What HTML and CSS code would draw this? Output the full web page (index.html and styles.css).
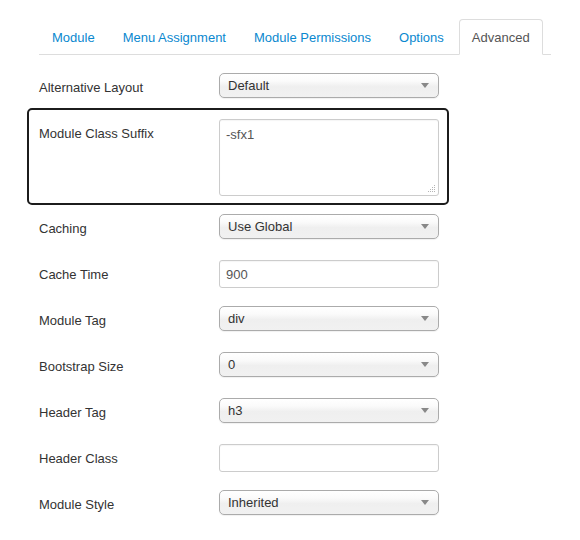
FILE: index.html
```html
<!DOCTYPE html>
<html>
<head>
<meta charset="utf-8">
<link rel="stylesheet" href="styles.css">
</head>
<body>
<div class="page">
  <ul class="tabs">
    <li><a>Module</a></li>
    <li><a>Menu Assignment</a></li>
    <li><a>Module Permissions</a></li>
    <li><a>Options</a></li>
    <li class="active"><a>Advanced</a></li>
  </ul>
  <div class="form">
    <div class="group">
      <div class="label">Alternative Layout</div>
      <div class="select"><span>Default</span><svg class="arrow" width="8" height="5" viewBox="0 0 8 5"><path d="M0 0H8L4 5Z" fill="#888"/></svg></div>
    </div>
    <div class="highlight">
      <div class="group">
        <div class="label">Module Class Suffix</div>
        <div class="textarea-wrap">
          <textarea class="textarea">-sfx1</textarea>
          <svg class="grip" width="8" height="8" viewBox="0 0 8 8">
            <g fill="#b5b5b5">
              <rect x="6" y="0" width="1" height="1"/>
              <rect x="4" y="2" width="1" height="1"/><rect x="6" y="2" width="1" height="1"/>
              <rect x="2" y="4" width="1" height="1"/><rect x="4" y="4" width="1" height="1"/><rect x="6" y="4" width="1" height="1"/>
              <rect x="0" y="6" width="1" height="1"/><rect x="2" y="6" width="1" height="1"/><rect x="4" y="6" width="1" height="1"/><rect x="6" y="6" width="1" height="1"/>
            </g>
          </svg>
        </div>
      </div>
    </div>
    <div class="group">
      <div class="label">Caching</div>
      <div class="select"><span>Use Global</span><svg class="arrow" width="8" height="5" viewBox="0 0 8 5"><path d="M0 0H8L4 5Z" fill="#888"/></svg></div>
    </div>
    <div class="group">
      <div class="label">Cache Time</div>
      <input class="input" type="text" value="900">
    </div>
    <div class="group">
      <div class="label">Module Tag</div>
      <div class="select"><span>div</span><svg class="arrow" width="8" height="5" viewBox="0 0 8 5"><path d="M0 0H8L4 5Z" fill="#888"/></svg></div>
    </div>
    <div class="group">
      <div class="label">Bootstrap Size</div>
      <div class="select"><span>0</span><svg class="arrow" width="8" height="5" viewBox="0 0 8 5"><path d="M0 0H8L4 5Z" fill="#888"/></svg></div>
    </div>
    <div class="group">
      <div class="label">Header Tag</div>
      <div class="select"><span>h3</span><svg class="arrow" width="8" height="5" viewBox="0 0 8 5"><path d="M0 0H8L4 5Z" fill="#888"/></svg></div>
    </div>
    <div class="group">
      <div class="label">Header Class</div>
      <input class="input" type="text" value="">
    </div>
    <div class="group">
      <div class="label">Module Style</div>
      <div class="select"><span>Inherited</span><svg class="arrow" width="8" height="5" viewBox="0 0 8 5"><path d="M0 0H8L4 5Z" fill="#888"/></svg></div>
    </div>
  </div>
</div>
</body>
</html>
```
FILE: styles.css
```css
* { box-sizing: border-box; }
html, body { margin: 0; padding: 0; background: #fff; }
body {
  font-family: "Liberation Sans", Arial, Helvetica, sans-serif;
  font-size: 13px;
  line-height: 18px;
  color: #333;
}
.page {
  padding: 19px 0 0 39px;
  width: 551px;
}
.tabs {
  list-style: none;
  margin: 0 0 18px 0;
  padding: 0;
  display: flex;
  border-bottom: 1px solid #ddd;
}
.tabs li {
  margin: 0 2px -1px 0;
}
.tabs a {
  display: block;
  padding: 9px 12px 7px;
  line-height: 18px;
  border: 1px solid transparent;
  border-radius: 4px 4px 0 0;
  color: #0a88cf;
  cursor: pointer;
}
.tabs .active a {
  color: #555;
  background: #fff;
  border-color: #ddd #ddd transparent #ddd;
}
.form {
  display: flex;
  flex-direction: column;
  gap: 18px;
}
.group {
  display: flex;
  align-items: flex-start;
  min-height: 28px;
}
.label {
  width: 180px;
  flex: none;
  padding-top: 6px;
  line-height: 18px;
}
.select {
  width: 220px;
  height: 25px;
  border: 1px solid #ababab;
  border-radius: 5px;
  background: linear-gradient(to bottom, #ffffff 0%, #fbfbfb 30%, #efefef 55%, #f1f1f1 100%);
  box-shadow: 0 1px 1px rgba(0, 0, 0, 0.06);
  display: flex;
  align-items: center;
  justify-content: space-between;
  padding: 1px 9px 0 8px;
  color: #333;
  line-height: 18px;
}
.arrow { display: block; margin-top: -1px; }
.input {
  width: 220px;
  height: 28px;
  border: 1px solid #ccc;
  border-radius: 3px;
  padding: 4px 6px;
  font: inherit;
  font-size: 13px;
  color: #555;
  box-shadow: inset 0 1px 1px rgba(0, 0, 0, 0.04);
  outline: none;
}
.highlight {
  margin: -11px 0 -9px -12px;
  width: 422px;
  border: 2px solid #1c1c1c;
  border-radius: 5px;
  padding: 9px 10px 7px;
}
.textarea-wrap {
  position: relative;
  width: 220px;
  height: 77px;
}
.textarea {
  display: block;
  width: 220px;
  height: 77px;
  border: 1px solid #ccc;
  border-radius: 3px;
  padding: 6px 6px 4px;
  font: inherit;
  font-size: 13px;
  line-height: 18px;
  color: #555;
  resize: none;
  outline: none;
  box-shadow: inset 0 1px 1px rgba(0, 0, 0, 0.04);
}
.grip {
  position: absolute;
  right: 3px;
  bottom: 3px;
}
```
